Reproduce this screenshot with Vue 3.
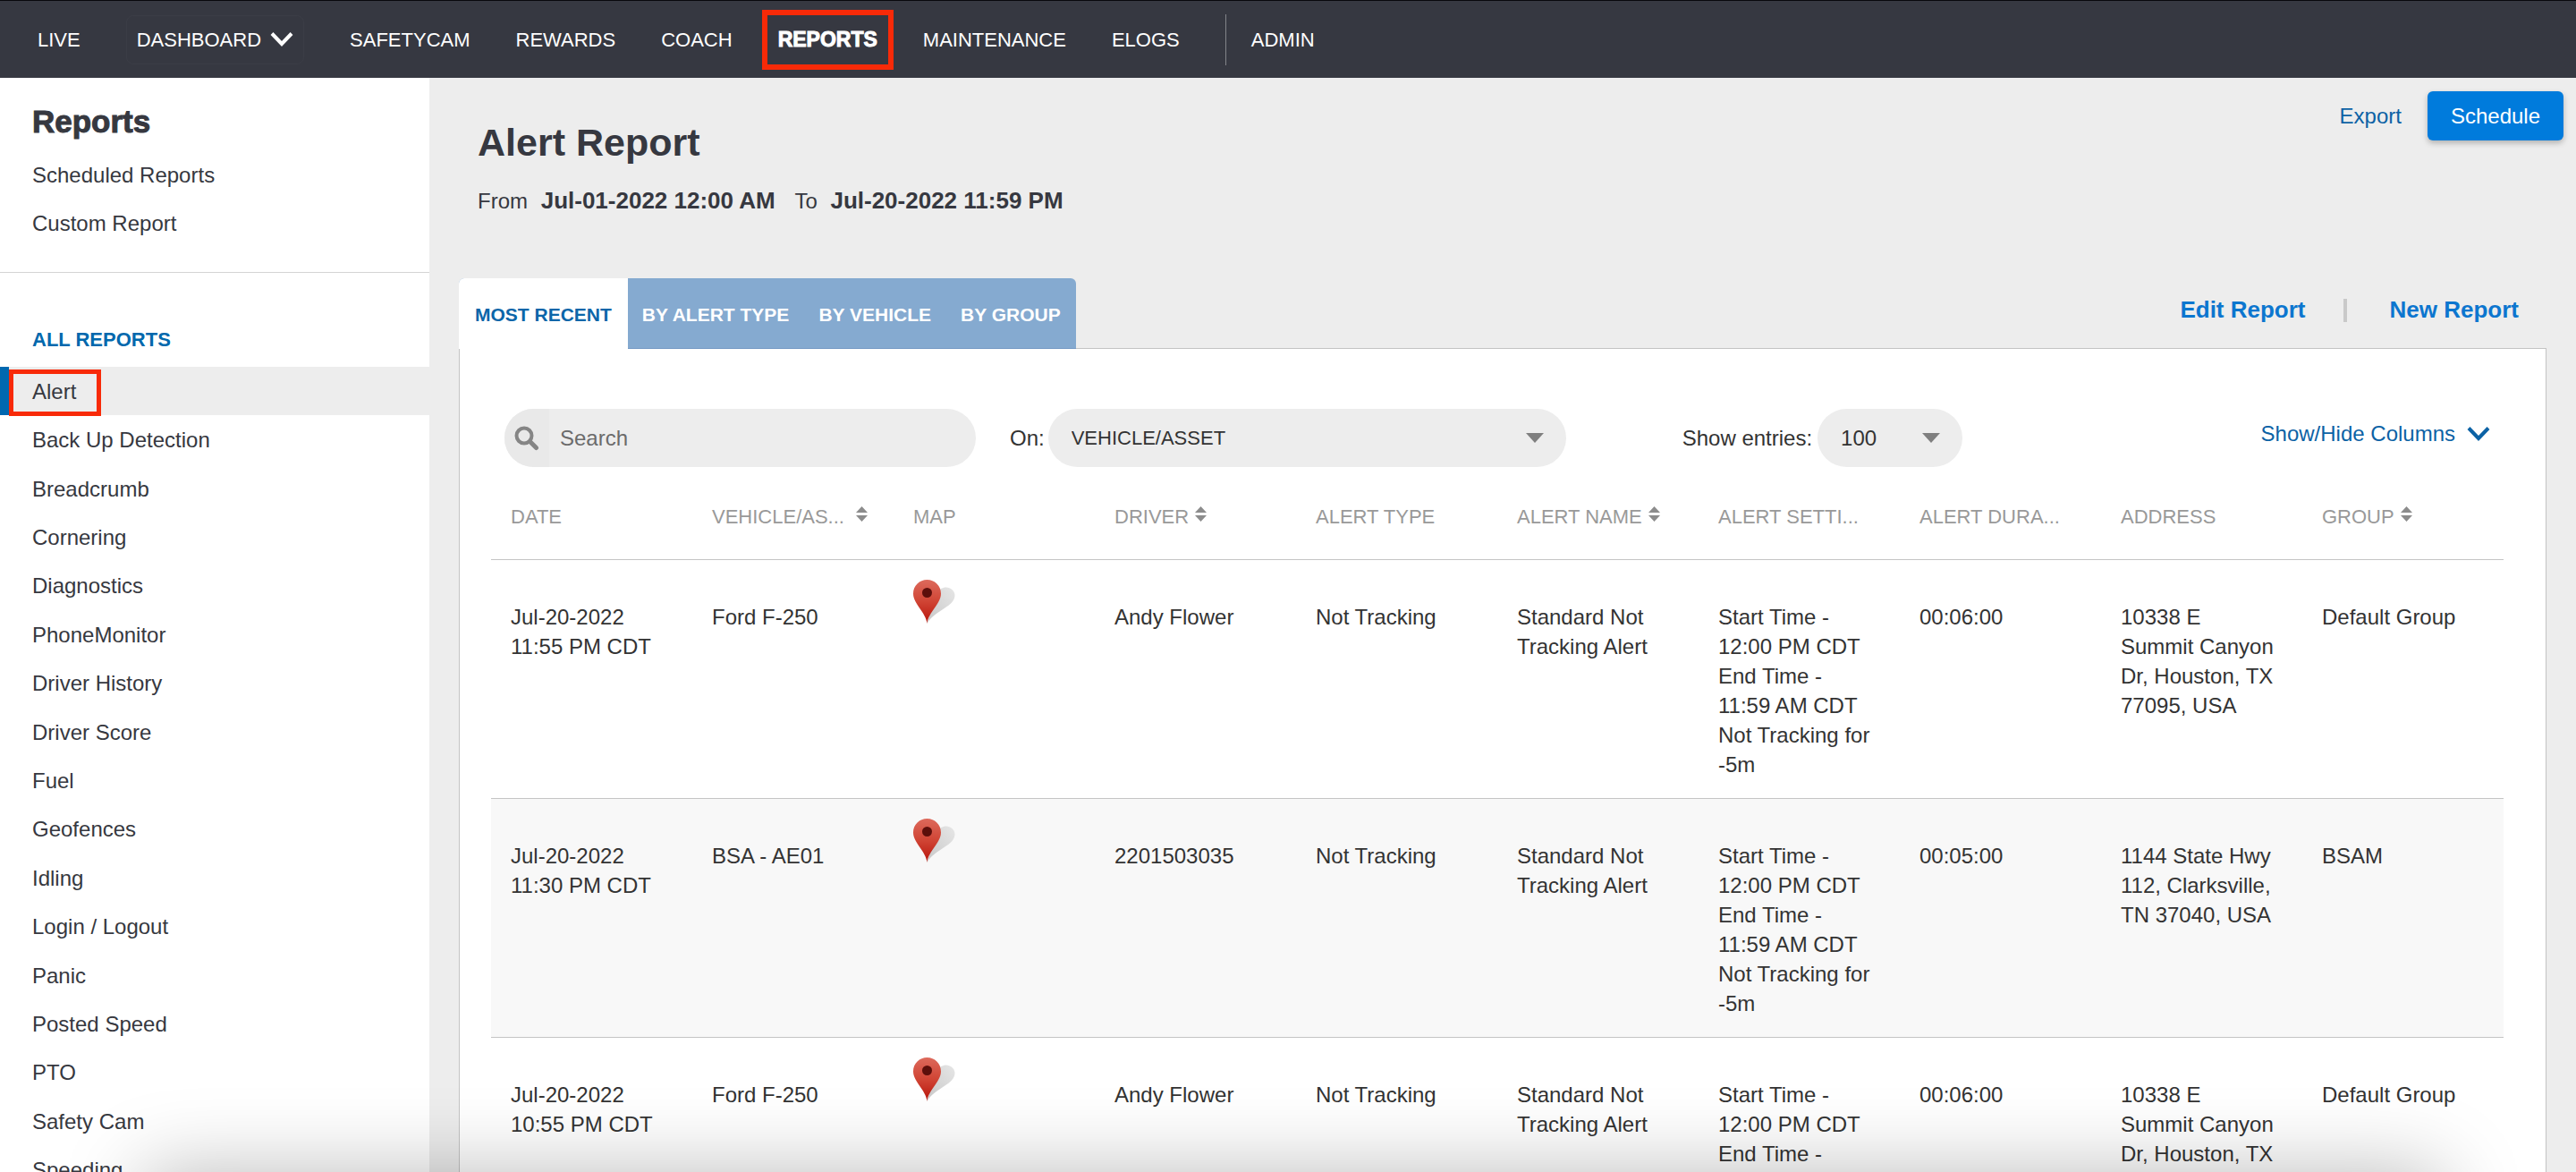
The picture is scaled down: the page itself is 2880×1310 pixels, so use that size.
<template>
  <div class="page">
    <nav class="topnav" aria-label="Main">
      <a class="topnav__link" href="#">LIVE</a>
      <button type="button" class="topnav__dropdown">
        DASHBOARD
        <svg width="26" height="18" viewBox="0 0 26 18" aria-hidden="true"><path d="M2 2.500l11 11.500L24 2.500" fill="none" stroke="currentColor" stroke-width="4" /></svg>
      </button>
      <a
        v-for="item in navItems"
        :key="item"
        class="topnav__link"
        :class="{ 'topnav__link--active': item === 'REPORTS' }"
        href="#"
      >{{ item }}</a>
      <a class="topnav__link topnav__link--admin" href="#">ADMIN</a>
    </nav>

    <div class="body">
      <aside class="sidebar">
        <h2 class="sidebar__title">Reports</h2>
        <ul class="sidebar__list">
          <li><a href="#"><span>Scheduled Reports</span></a></li>
          <li><a href="#"><span>Custom Report</span></a></li>
        </ul>
        <hr class="sidebar__rule">
        <h3 class="sidebar__heading">ALL REPORTS</h3>
        <ul class="sidebar__list sidebar__list--all">
          <li v-for="report in reports" :key="report">
            <a href="#" :class="{ active: report === 'Alert' }"><span>{{ report }}</span></a>
          </li>
        </ul>
      </aside>

      <main class="main">
        <div class="main__actions">
          <a href="#">Export</a>
          <button type="button" class="btn-schedule">Schedule</button>
        </div>
        <header class="main__header">
          <h1>Alert Report</h1>
          <p>From <strong>Jul-01-2022 12:00 AM</strong> <span class="to">To</span> <strong>Jul-20-2022 11:59 PM</strong></p>
        </header>

        <div class="tabbar">
          <div class="tabs" role="tablist">
            <button
              v-for="tab in tabs"
              :key="tab"
              type="button"
              role="tab"
              class="tab"
              :class="{ 'tab--active': tab === activeTab }"
              :aria-selected="tab === activeTab"
              @click="activeTab = tab"
            >{{ tab }}</button>
          </div>
          <div class="report-links">
            <a href="#">Edit Report</a>
            <span class="report-links__sep"></span>
            <a href="#">New Report</a>
          </div>
        </div>

        <section class="card">
          <div class="filters">
            <div class="search">
              <span class="search__icon">
                <svg width="28" height="28" viewBox="0 0 28 28" aria-hidden="true"><circle cx="11" cy="11" r="8.500" fill="none" stroke="#858585" stroke-width="4" /><path d="M17.500 17.500l7 7" stroke="#858585" stroke-width="5" stroke-linecap="round" /></svg>
              </span>
              <input v-model="search" type="text" placeholder="Search" aria-label="Search">
            </div>
            <label class="filters__on" for="search-on">On:</label>
            <div class="select select--on">
              <select id="search-on"><option>VEHICLE/ASSET</option></select>
              <svg width="20" height="11" viewBox="0 0 20 11" aria-hidden="true"><path d="M0 0h20L10 11z" fill="#7f7f7f" /></svg>
            </div>
            <label class="filters__entries" for="entries">Show entries:</label>
            <div class="select select--entries">
              <select id="entries"><option>100</option></select>
              <svg width="20" height="11" viewBox="0 0 20 11" aria-hidden="true"><path d="M0 0h20L10 11z" fill="#7f7f7f" /></svg>
            </div>
            <button type="button" class="columns-toggle">
              Show/Hide Columns
              <svg width="26" height="18" viewBox="0 0 26 18" aria-hidden="true"><path d="M2 2.500l11 11.500L24 2.500" fill="none" stroke="currentColor" stroke-width="4" /></svg>
            </button>
          </div>

          <table class="table">
            <thead>
              <tr>
                <th v-for="col in columns" :key="col.label" scope="col">
                  <span class="th" :class="{ 'th--wide': col.wide }">
                    {{ col.label }}
                    <svg v-if="col.sort" width="13" height="17" viewBox="0 0 13 17" aria-hidden="true"><path d="M0 7h13L6.500 0zM0 10h13l-6.500 7z" fill="#8c8c8c" /></svg>
                  </span>
                </th>
              </tr>
            </thead>
            <tbody>
              <tr v-for="row in rows" :key="row.date">
                <td>{{ row.date }}</td>
                <td>{{ row.vehicle }}</td>
                <td class="map">
                  <a href="#" aria-label="Show on map">
                    <svg width="47" height="50" viewBox="0 0 47 50" aria-hidden="true">
                      <defs>
                        <linearGradient id="pin" x1="0" y1="0" x2="0" y2="1">
                          <stop offset="0" stop-color="#dd6a5c" />
                          <stop offset="0.500" stop-color="#d04434" />
                          <stop offset="1" stop-color="#b8150c" />
                        </linearGradient>
                        <linearGradient id="pinShadow" x1="1" y1="0" x2="0" y2="1">
                          <stop offset="0" stop-color="#e6e6e6" />
                          <stop offset="1" stop-color="#c8c8c8" />
                        </linearGradient>
                      </defs>
                      <path d="M15.500 49C19 38 23 14 31 10c7-4 15 0 15.500 7C47 30 24 34 15.500 49z" fill="url(#pinShadow)" />
                      <path d="M15.500 49C14 36 0 27 0 15.500 0 6.500 7 0 15.500 0S31 6.500 31 15.500C31 27 17 36 15.500 49z" fill="url(#pin)" />
                      <circle cx="15.500" cy="14.500" r="5.500" fill="#5c0f0b" />
                    </svg>
                  </a>
                </td>
                <td>{{ row.driver }}</td>
                <td>Not Tracking</td>
                <td>Standard Not Tracking Alert</td>
                <td>Start Time -<br>12:00 PM CDT<br>End Time -<br>11:59 AM CDT<br>Not Tracking for<br>-5m</td>
                <td>{{ row.duration }}</td>
                <td><template v-for="line in row.address" :key="line">{{ line }}<br></template></td>
                <td>{{ row.group }}</td>
              </tr>
            </tbody>
          </table>
        </section>
      </main>
    </div>
    <div class="bottom-shadow"></div>
  </div>
</template>

<script setup>
import { ref } from 'vue'

const navItems = ['SAFETYCAM', 'REWARDS', 'COACH', 'REPORTS', 'MAINTENANCE', 'ELOGS']

const reports = [
  'Alert', 'Back Up Detection', 'Breadcrumb', 'Cornering', 'Diagnostics', 'PhoneMonitor',
  'Driver History', 'Driver Score', 'Fuel', 'Geofences', 'Idling', 'Login / Logout',
  'Panic', 'Posted Speed', 'PTO', 'Safety Cam', 'Speeding',
]

const tabs = ['MOST RECENT', 'BY ALERT TYPE', 'BY VEHICLE', 'BY GROUP']
const activeTab = ref('MOST RECENT')
const search = ref('')

const columns = [
  { label: 'DATE' },
  { label: 'VEHICLE/AS...', sort: true, wide: true },
  { label: 'MAP' },
  { label: 'DRIVER', sort: true },
  { label: 'ALERT TYPE' },
  { label: 'ALERT NAME', sort: true },
  { label: 'ALERT SETTI...' },
  { label: 'ALERT DURA...' },
  { label: 'ADDRESS' },
  { label: 'GROUP', sort: true },
]

const houston = ['10338 E', 'Summit Canyon', 'Dr, Houston, TX', '77095, USA']
const clarksville = ['1144 State Hwy', '112, Clarksville,', 'TN 37040, USA']

const rows = [
  { date: 'Jul-20-2022 11:55 PM CDT', vehicle: 'Ford F-250', driver: 'Andy Flower', duration: '00:06:00', address: houston, group: 'Default Group' },
  { date: 'Jul-20-2022 11:30 PM CDT', vehicle: 'BSA - AE01', driver: '2201503035', duration: '00:05:00', address: clarksville, group: 'BSAM' },
  { date: 'Jul-20-2022 10:55 PM CDT', vehicle: 'Ford F-250', driver: 'Andy Flower', duration: '00:06:00', address: houston, group: 'Default Group' },
]
</script>

<style>
body { background: #ededed; }
</style>

<style scoped>
.page {
  height: 100vh;
  display: flex;
  flex-direction: column;
  overflow: hidden;
  font-family: "Liberation Sans", Arial, sans-serif;
  font-size: 24px;
  line-height: 33px;
  color: #333;
}
.page *, .page *::after { box-sizing: border-box; }
a { text-decoration: none; color: #0c62a5; }
button, input, select { font: inherit; color: inherit; border: none; background: none; padding: 0; margin: 0; }
button, select { cursor: pointer; }
h1, h2, h3, p, ul { margin: 0; padding: 0; }

.topnav {
  flex: none;
  height: 87px;
  display: flex;
  align-items: center;
  gap: 51px;
  padding-left: 42px;
  background: #363841;
  border-top: 1px solid #08080c;
  font-size: 22px;
}
.topnav__link { position: relative; color: #fff; }
.topnav__link--active {
  font-size: 23px;
  font-weight: 900;
  -webkit-text-stroke: 1px #fff;
}
.topnav__link--active::after {
  content: '';
  position: absolute;
  inset: -17px -18px;
  border: 6px solid #f82a08;
}
.topnav__link--admin {
  padding: 12px 0 12px 28px;
  border-left: 1px solid #83848a;
}
.topnav__dropdown {
  display: flex;
  align-items: center;
  gap: 10px;
  height: 55px;
  padding: 0 11px;
  color: #fff;
  border: 1px solid #3b3d46;
  border-radius: 8px;
}

.body { flex: 1; min-height: 0; display: flex; }
.sidebar {
  flex: none;
  width: 480px;
  padding-top: 29px;
  background: #fff;
  color: #363840;
  overflow: hidden;
}
.sidebar__title {
  margin: 0 36px 12px;
  font-size: 35px;
  font-weight: 900;
  line-height: 40px;
  -webkit-text-stroke: 1px #363840;
}
.sidebar__list { list-style: none; display: grid; grid-auto-rows: minmax(54px, 1fr); }
.sidebar__list--all { min-height: 925px; }
.sidebar__list a {
  display: flex;
  align-items: center;
  height: 100%;
  padding-left: 36px;
  color: #363840;
}
.sidebar__list .active {
  padding-left: 26px;
  border-left: 10px solid #0068b0;
  background: #ededed;
}
.sidebar__list .active span { position: relative; }
.sidebar__list .active span::after {
  content: '';
  position: absolute;
  inset: -8px -28px -11px -26px;
  border: 5px solid #f82a08;
}
.sidebar__rule { margin: 28px 0 58px; border: none; border-top: 1px solid #d4d4d4; }
.sidebar__heading { margin: 0 36px 13px; font-size: 22px; line-height: 34px; color: #0068ad; }

.main {
  position: relative;
  flex: 1;
  min-width: 0;
  padding: 46px 33px 0;
  background: #ededed;
  overflow: hidden;
}
.main__actions {
  position: absolute;
  top: 15px;
  right: 14px;
  display: flex;
  align-items: center;
  gap: 29px;
}
.btn-schedule {
  height: 55px;
  padding: 0 26px;
  border-radius: 6px;
  background: #007bdc;
  color: #fff;
  box-shadow: 0 3px 6px rgba(0, 0, 0, 0.25);
}
.main__header { padding-left: 21px; color: #363840; }
.main__header h1 { font-size: 43px; line-height: 52px; }
.main__header p { margin: 22px 0 69px; line-height: 34px; }
.main__header strong { margin-left: 8px; font-size: 26px; }
.to { margin-left: 15px; }

.tabbar {
  position: relative;
  display: flex;
  justify-content: space-between;
  align-items: center;
  margin-bottom: -1px;
}
.tabs { display: flex; border-radius: 6px 6px 0 0; overflow: hidden; background: #85aad0; }
.tab {
  height: 79px;
  padding: 2px 17px 0 16px;
  color: #fff;
  font-size: 21px;
  font-weight: bold;
  border-bottom: 1px solid #7599c4;
}
.tab--active {
  padding: 2px 18px 0;
  background: #fff;
  color: #0c66a9;
  border-bottom-color: #fff;
}
.report-links {
  display: flex;
  align-items: center;
  gap: 42px;
  padding: 0 31px 8px 0;
  font-size: 26px;
  font-weight: bold;
}
.report-links a { color: #0c76cf; }
.report-links__sep { width: 4px; height: 26px; margin-right: 6px; background: #c9c9c9; }

.card {
  padding: 67px 47px 0 35px;
  background: #fff;
  border: 1px solid #c4c4c4;
}
.filters { display: flex; align-items: center; padding: 0 15px; }
.search {
  flex: 0 1 527px;
  display: flex;
  height: 65px;
  border-radius: 33px;
  background: #ededed;
  overflow: hidden;
}
.search__icon {
  flex: none;
  width: 50px;
  display: flex;
  align-items: center;
  justify-content: center;
  background: #e9e9e9;
}
.search input { flex: 1; min-width: 0; padding-left: 12px; outline: none; }
.search input::placeholder { color: #6b6b6b; opacity: 1; }
.filters__on { margin: 0 4px 0 38px; }
.filters__entries { margin: 0 6px 0 130px; }
.select { position: relative; }
.select--on { flex: 0 1 579px; font-size: 22px; }
.select--entries { flex: 0 0 162px; }
.select select {
  appearance: none;
  width: 100%;
  height: 65px;
  padding: 0 26px;
  border-radius: 33px;
  background: #ededed;
}
.select svg { position: absolute; right: 25px; top: 27px; pointer-events: none; }
.columns-toggle {
  display: flex;
  align-items: center;
  gap: 13px;
  margin-left: auto;
  padding-bottom: 10px;
  color: #0c62a5;
}

.table {
  width: 100%;
  margin-top: 39px;
  table-layout: fixed;
  border-collapse: separate;
  border-spacing: 0;
}
.table th {
  padding: 0 0 31px 22px;
  font-size: 22px;
  font-weight: normal;
  text-align: left;
  color: #999;
  border-bottom: 1px solid #c4c4c4;
}
.th { display: flex; align-items: center; gap: 7px; white-space: nowrap; }
.th svg { margin-bottom: 7px; }
.th--wide { gap: 13px; }
.table td {
  padding: 47px 22px 21px;
  vertical-align: top;
  border-bottom: 1px solid #c4c4c4;
}
.table td.map { padding-top: 22px; }
.map svg { display: block; }
.table tbody tr:nth-child(even) { background: #f8f8f8; }

/* soft shade along the lower edge of the window */
.bottom-shadow {
  position: fixed;
  top: 100%;
  left: 160px;
  right: 150px;
  height: 120px;
  box-shadow: 0 0 90px rgba(0, 0, 0, 0.27);
  pointer-events: none;
}
</style>
